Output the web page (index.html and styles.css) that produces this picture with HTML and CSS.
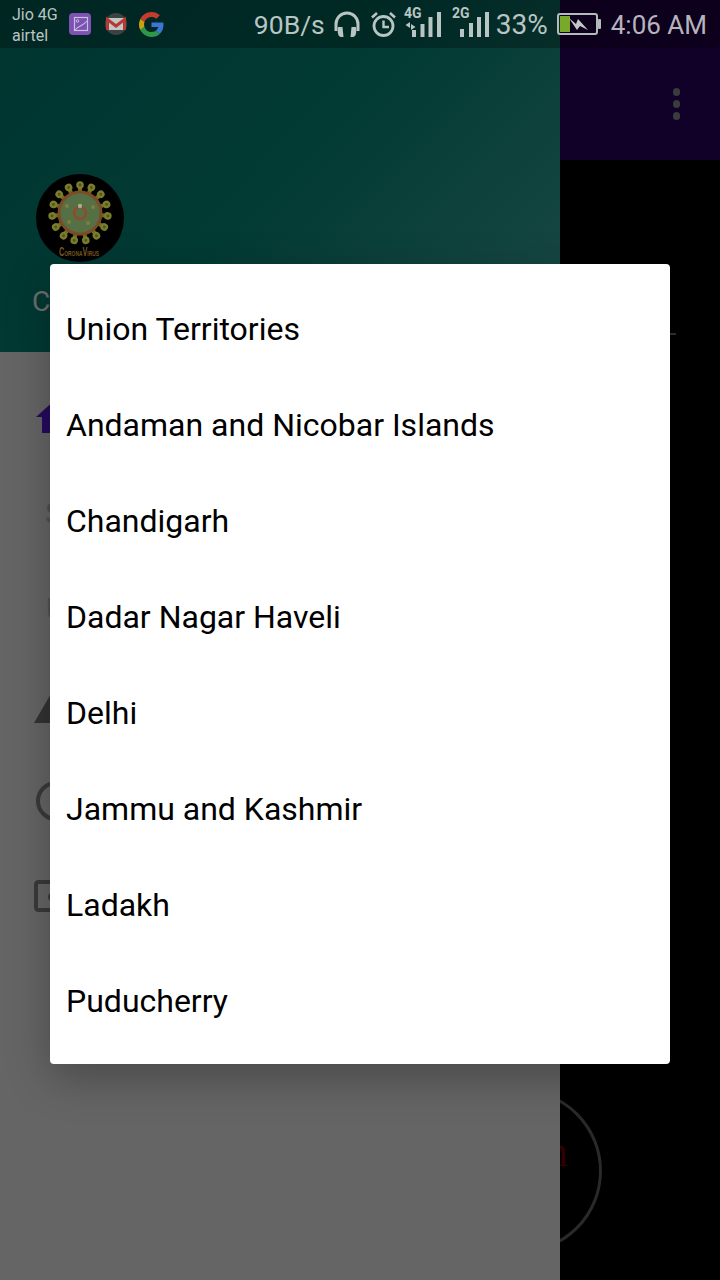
FILE: index.html
```html
<!DOCTYPE html>
<html lang="en">
<head>
    <meta charset="UTF-8">
    <meta name="viewport" content="width=device-width, initial-scale=1.0">
    <title>Union Territories</title>
    <link rel="stylesheet" href="styles.css">
</head>
<body>
    <div class="screen">
        <!-- app behind the drawer -->
        <div class="appbar">
            <div class="overflow"><span></span><span></span><span></span></div>
        </div>
        <div class="main">
            <div class="main-rule"></div>
            <div class="gauge"><span class="gauge-text">n</span></div>
        </div>

        <!-- navigation drawer -->
        <div class="drawer">
            <div class="drawer-header">
                <svg class="logo" width="88" height="88" viewBox="0 0 88 88">
                    <defs>
                        <filter id="soft"><feGaussianBlur stdDeviation="0.5"/></filter>
                        <g id="spike">
                            <path d="M44 22V17" stroke="#6e6e28" stroke-width="4"/>
                            <circle cx="44" cy="16" r="3.800" fill="#7c7d2c"/>
                            <circle cx="44" cy="16" r="1.400" fill="#4d5228"/>
                        </g>
                    </defs>
                    <circle cx="44" cy="44" r="44" fill="#000"/>
                    <g transform="translate(0 -5)" filter="url(#soft)">
                        <use href="#spike"/>
                        <use href="#spike" transform="rotate(24 44 44)"/>
                        <use href="#spike" transform="rotate(48 44 44)"/>
                        <use href="#spike" transform="rotate(72 44 44)"/>
                        <use href="#spike" transform="rotate(96 44 44)"/>
                        <use href="#spike" transform="rotate(120 44 44)"/>
                        <use href="#spike" transform="rotate(144 44 44)"/>
                        <use href="#spike" transform="rotate(168 44 44)"/>
                        <use href="#spike" transform="rotate(192 44 44)"/>
                        <use href="#spike" transform="rotate(216 44 44)"/>
                        <use href="#spike" transform="rotate(240 44 44)"/>
                        <use href="#spike" transform="rotate(264 44 44)"/>
                        <use href="#spike" transform="rotate(288 44 44)"/>
                        <use href="#spike" transform="rotate(312 44 44)"/>
                        <use href="#spike" transform="rotate(336 44 44)"/>
                        <circle cx="44" cy="44" r="21" fill="#566f45" stroke="#7d4c28" stroke-width="3"/>
                        <circle cx="44" cy="44" r="6" fill="none" stroke="#96482a" stroke-width="2.400"/>
                        <circle cx="44" cy="37" r="2.200" fill="#a9ad8c"/>
                        <circle cx="31" cy="37" r="2" fill="#7d7f3a"/>
                        <circle cx="57" cy="38" r="2" fill="#7d7f3a"/>
                        <circle cx="33" cy="53" r="2" fill="#7d7f3a"/>
                        <circle cx="52" cy="54" r="2" fill="#7d7f3a"/>
                    </g>
                    <text class="logo-text" x="23" y="82" textLength="40" lengthAdjust="spacingAndGlyphs">CoronaVirus</text>
                </svg>
                <div class="drawer-title">C</div>
            </div>
            <div class="drawer-list">
                <div class="drawer-item">
                    <svg class="nav-icon" viewBox="0 0 24 24"><path fill="#260a5e" d="M10 20v-6h4v6h5v-8h3L12 3 2 12h3v8z"/></svg>
                </div>
                <div class="drawer-item"><span class="nav-letter">S</span></div>
                <div class="drawer-item"><span class="nav-letter nav-letter-u">U</span></div>
                <div class="drawer-item">
                    <svg class="nav-icon" viewBox="0 0 24 24"><path fill="#333" d="M1 21h22L12 2 1 21z"/></svg>
                </div>
                <div class="drawer-item">
                    <svg class="nav-icon" viewBox="0 0 24 24"><circle cx="12" cy="12" r="9" fill="none" stroke="#3a3a3a" stroke-width="2"/></svg>
                </div>
                <div class="drawer-item">
                    <svg class="nav-icon" viewBox="0 0 24 24">
                        <rect x="2" y="4.500" width="20" height="14" rx="1.200" fill="none" stroke="#3a3a3a" stroke-width="2"/>
                        <circle cx="10" cy="12" r="2" fill="#3a3a3a"/>
                    </svg>
                </div>
            </div>
        </div>

        <!-- status bar -->
        <div class="statusbar">
            <div class="carrier">Jio 4G<br>airtel</div>
            <svg class="gallery" width="22" height="22" viewBox="0 0 22 22">
                <rect width="22" height="22" rx="4" fill="#7c52b4"/>
                <rect x="5.500" y="4.500" width="13" height="13" fill="none" stroke="#cbbfdc" stroke-width="1.200"/>
                <circle cx="8.500" cy="8" r="1.300" fill="none" stroke="#cbbfdc"/>
                <path d="M6 17C10 12 13 14 18 8" fill="none" stroke="#cbbfdc" stroke-width="1.100"/>
            </svg>
            <svg class="gmail" width="22" height="22" viewBox="0 0 22 22">
                <circle cx="11" cy="11" r="11" fill="#3c4242"/>
                <path d="M1 5h20v12H1z" fill="#c2c6c6"/>
                <path d="M2.500 17V6.500l8.500 6.500 8.500-6.500V17" fill="none" stroke="#b23a32" stroke-width="3"/>
            </svg>
            <svg class="google" width="25" height="25" viewBox="0 0 48 48">
                <path fill="#c53c2e" d="M24 9.500c3.540 0 6.710 1.220 9.210 3.600l6.850-6.850C35.900 2.380 30.470 0 24 0 14.620 0 6.510 5.380 2.560 13.220l7.980 6.190C12.430 13.720 17.740 9.500 24 9.500z"/>
                <path fill="#3a76d2" d="M46.980 24.550c0-1.570-.15-3.090-.38-4.550H24v9.020h12.940c-.58 2.960-2.260 5.480-4.780 7.180l7.73 6c4.510-4.180 7.090-10.360 7.090-17.65z"/>
                <path fill="#c7a312" d="M10.530 28.590c-.48-1.450-.76-2.990-.76-4.590s.27-3.140.76-4.590l-7.980-6.190C.92 16.460 0 20.120 0 24c0 3.880.92 7.540 2.560 10.780l7.970-6.190z"/>
                <path fill="#2e974a" d="M24 48c6.480 0 11.930-2.130 15.890-5.810l-7.730-6c-2.150 1.450-4.920 2.300-8.160 2.300-6.260 0-11.570-4.220-13.470-9.910l-7.980 6.190C6.510 42.620 14.620 48 24 48z"/>
            </svg>

            <div class="status-right">
                <span class="status-text speed">90B/s</span>
                <svg class="headphones" width="26" height="26" viewBox="0 0 26 26">
                    <path d="M2 20V13a11 11 0 0 1 22 0v7" fill="none" stroke="#b9c5c3" stroke-width="3"/>
                    <path d="M4 16h4.500l1 10H7c-2.500 0-4-4-3-10zM22 16h-4.500l-1 10H19c2.500 0 4-4 3-10z" fill="#b9c5c3"/>
                </svg>
                <svg class="alarm" width="25" height="26" viewBox="0 0 25 26">
                    <circle cx="12.500" cy="15" r="9.500" fill="none" stroke="#b9c5c3" stroke-width="2.800"/>
                    <path d="M12.500 9.500V16h5.500" fill="none" stroke="#b9c5c3" stroke-width="2.400"/>
                    <path d="M1 6.500l5-4.500M24 6.500L19 2" fill="none" stroke="#b9c5c3" stroke-width="2.600"/>
                </svg>
                <svg class="signal signal-4g" width="38" height="34" viewBox="0 -4 38 34">
                    <text class="net-text" x="0" y="11">4G</text>
                    <path d="M6 15v6l-4.500-3zM7 17v6l4.500-3z" fill="#b9c5c3"/>
                    <rect x="8" y="23" width="4" height="7" fill="#b9c5c3"/>
                    <rect x="16.500" y="17" width="4" height="13" fill="#b9c5c3"/>
                    <rect x="24.500" y="10" width="4" height="20" fill="#b9c5c3"/>
                    <rect x="33" y="5" width="4" height="25" fill="#b9c5c3"/>
                </svg>
                <svg class="signal signal-2g" width="38" height="34" viewBox="0 -4 38 34">
                    <text class="net-text" x="0" y="11">2G</text>
                    <rect x="8" y="22" width="4" height="8" fill="#b9c5c3"/>
                    <rect x="17" y="16" width="4" height="14" fill="#b9c5c3"/>
                    <rect x="25" y="10" width="4" height="20" fill="#b9c5c3"/>
                    <rect x="33" y="5" width="4" height="25" fill="#b9c5c3"/>
                </svg>
                <span class="status-text percent">33%</span>
                <svg class="battery" width="44" height="22" viewBox="0 0 44 22">
                    <rect x="1" y="1" width="39" height="20" rx="2" fill="none" stroke="#b4bab9" stroke-width="2"/>
                    <rect x="41" y="6" width="3" height="10" rx="1" fill="#b4bab9"/>
                    <rect x="3" y="3" width="10" height="16" fill="#78a92a"/>
                    <path d="M12 5l7 6 2-5 10 11-8-4-3 4z" fill="#c3c7c7"/>
                </svg>
                <span class="status-text time">4:06 AM</span>
            </div>
        </div>

        <!-- dialog -->
        <div class="dialog">
            <div class="dialog-row">Union Territories</div>
            <div class="dialog-row">Andaman and Nicobar Islands</div>
            <div class="dialog-row">Chandigarh</div>
            <div class="dialog-row">Dadar Nagar Haveli</div>
            <div class="dialog-row">Delhi</div>
            <div class="dialog-row">Jammu and Kashmir</div>
            <div class="dialog-row">Ladakh</div>
            <div class="dialog-row">Puducherry</div>
        </div>
    </div>
</body>
</html>
```
FILE: styles.css
```css
html, body {
    margin: 0;
    background-color: #000;
}

.screen {
    position: relative;
    display: flex;
    flex-direction: column;
    width: 720px;
    height: 1280px;
    overflow: hidden;
    font-family: Roboto, "Liberation Sans", sans-serif;
    background-color: #000;
}

/* app behind the drawer */
.appbar {
    display: flex;
    justify-content: flex-end;
    height: 112px;
    padding-top: 48px;
    background-color: #110028;
}

.overflow {
    display: flex;
    flex-direction: column;
    gap: 4.500px;
    margin: 40px 40px 0 0;
}

.overflow span {
    width: 7.500px;
    height: 7.500px;
    border-radius: 50%;
    background-color: #3b3b3b;
}

.main {
    flex: 1;
    display: flex;
    flex-direction: column;
    align-items: flex-end;
    padding-bottom: 27px;
}

.main-rule {
    width: 60px;
    height: 2px;
    margin: 173px 44px 0 0;
    background-color: #333;
}

.gauge {
    display: flex;
    align-items: center;
    justify-content: flex-end;
    box-sizing: border-box;
    width: 164px;
    height: 164px;
    margin: auto 118px 0 0;
    padding: 0 31px 38px 0;
    border: 3px solid #2a2a2a;
    border-radius: 50%;
}

.gauge-text {
    font-family: "Liberation Serif", serif;
    font-size: 44px;
    line-height: 1;
    color: #300000;
}

/* drawer */
.drawer {
    position: absolute;
    top: 0;
    left: 0;
    width: 560px;
    height: 1280px;
    background-color: #656565;
}

.drawer-header {
    box-sizing: border-box;
    height: 352px;
    padding: 174px 0 0 36px;
    background: linear-gradient(135deg, #003530 0%, #023a34 50%, #1b4945 100%);
}

.logo {
    display: block;
}

.logo-text {
    font-family: "Liberation Sans", sans-serif;
    font-size: 12px;
    font-weight: bold;
    font-variant: small-caps;
    fill: #7a5a22;
}

.drawer-title {
    margin: 22px 0 0 -4px;
    font-size: 28px;
    line-height: 36px;
    color: #6d6d6d;
}

.drawer-list {
    padding-top: 17px;
}

.drawer-item {
    display: flex;
    align-items: center;
    height: 96px;
    padding-left: 32px;
}

.nav-icon {
    width: 48px;
    height: 48px;
}

.nav-letter {
    margin-left: 13px;
    font-size: 32px;
    color: #4f4f4f;
}

.nav-letter-u {
    margin-left: 14px;
}

/* status bar */
.statusbar {
    position: absolute;
    top: 0;
    left: 0;
    right: 0;
    display: flex;
    align-items: center;
    box-sizing: border-box;
    height: 48px;
    padding: 0 13px 0 12px;
    background-color: rgba(0, 0, 0, 0.28);
}

.carrier {
    width: 46px;
    padding-top: 2px;
    font-size: 16px;
    line-height: 21px;
    color: #b9c5c3;
    white-space: nowrap;
}

.gallery {
    margin-left: 11px;
}

.gmail {
    margin-left: 14px;
}

.google {
    margin-left: 12px;
}

.status-right {
    display: flex;
    align-items: center;
    margin-left: auto;
}

.status-text {
    padding-top: 2px;
    font-size: 26px;
    line-height: 46px;
    color: #b9c5c3;
    white-space: nowrap;
}

.speed {
    font-size: 26.500px;
}

.headphones {
    margin-left: 9px;
}

.alarm {
    margin-left: 11px;
}

.signal {
    margin-top: -8px;
}

.signal-4g {
    margin-left: 8px;
}

.signal-2g {
    margin-left: 10px;
}

.net-text {
    font-family: Roboto, sans-serif;
    font-size: 14px;
    font-weight: bold;
    fill: #b9c5c3;
}

.percent {
    margin-left: 6px;
    font-size: 28px;
}

.battery {
    margin-left: 9px;
}

.time {
    margin-left: 10px;
    color: #b6b3bc;
}

/* dialog */
.dialog {
    position: absolute;
    top: 264px;
    left: 50px;
    box-sizing: border-box;
    width: 620px;
    height: 800px;
    padding: 16px 0;
    border-radius: 4px;
    background-color: #fff;
    box-shadow: 0 14px 44px rgba(0, 0, 0, 0.28);
}

.dialog-row {
    display: flex;
    align-items: center;
    box-sizing: border-box;
    height: 96px;
    padding: 2px 16px 0;
    font-size: 32px;
    color: #000;
}
```
